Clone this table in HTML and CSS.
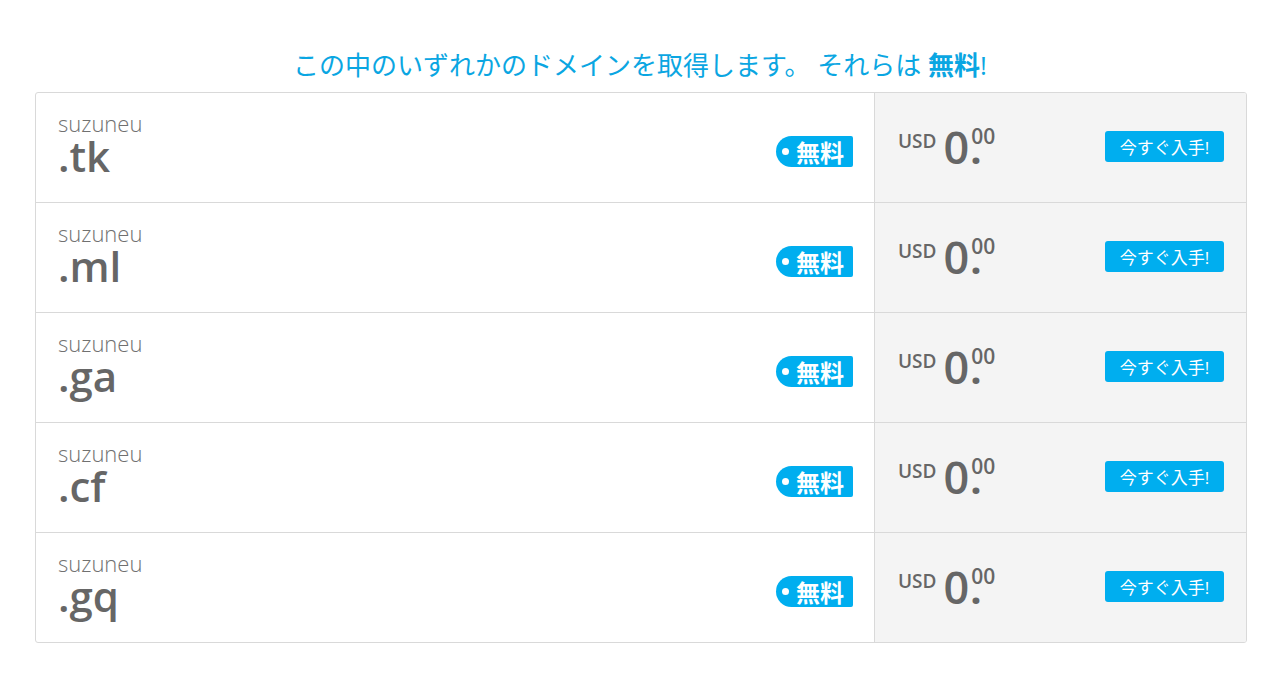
FILE: index.html
```html
<!DOCTYPE html>
<html lang="ja">
<head>
<meta charset="utf-8">
<link rel="stylesheet" href="styles.css">
</head>
<body>
<div class="page">
  <h2 class="title">この中のいずれかのドメインを取得します。 それらは <strong>無料</strong>!</h2>
  <div class="table">
    <div class="row">
      <div class="name"><div class="domain"><span class="sld">suzuneu</span><span class="tld">.tk</span></div><span class="tag"><span class="dot"></span>無料</span></div>
      <div class="price"><div class="amount"><span class="cur">USD</span><span class="int">0</span><span class="dec"><span class="cents">00</span><span class="pt">.</span></span></div><span class="btn">今すぐ入手!</span></div>
    </div>
    <div class="row">
      <div class="name"><div class="domain"><span class="sld">suzuneu</span><span class="tld">.ml</span></div><span class="tag"><span class="dot"></span>無料</span></div>
      <div class="price"><div class="amount"><span class="cur">USD</span><span class="int">0</span><span class="dec"><span class="cents">00</span><span class="pt">.</span></span></div><span class="btn">今すぐ入手!</span></div>
    </div>
    <div class="row">
      <div class="name"><div class="domain"><span class="sld">suzuneu</span><span class="tld">.ga</span></div><span class="tag"><span class="dot"></span>無料</span></div>
      <div class="price"><div class="amount"><span class="cur">USD</span><span class="int">0</span><span class="dec"><span class="cents">00</span><span class="pt">.</span></span></div><span class="btn">今すぐ入手!</span></div>
    </div>
    <div class="row">
      <div class="name"><div class="domain"><span class="sld">suzuneu</span><span class="tld">.cf</span></div><span class="tag"><span class="dot"></span>無料</span></div>
      <div class="price"><div class="amount"><span class="cur">USD</span><span class="int">0</span><span class="dec"><span class="cents">00</span><span class="pt">.</span></span></div><span class="btn">今すぐ入手!</span></div>
    </div>
    <div class="row">
      <div class="name"><div class="domain"><span class="sld">suzuneu</span><span class="tld">.gq</span></div><span class="tag"><span class="dot"></span>無料</span></div>
      <div class="price"><div class="amount"><span class="cur">USD</span><span class="int">0</span><span class="dec"><span class="cents">00</span><span class="pt">.</span></span></div><span class="btn">今すぐ入手!</span></div>
    </div>
  </div>
</div>
</body>
</html>
```
FILE: styles.css
```css
html, body {
  margin: 0;
  padding: 0;
  background: #fff;
  font-family: "Open Sans", "Noto Sans CJK JP", sans-serif;
}
.page {
  padding-top: 47px;
}
.title {
  margin: 0 0 8px;
  text-align: center;
  font-size: 26px;
  font-weight: 400;
  line-height: 37px;
  color: #0aa6e2;
}
.title strong {
  font-weight: 700;
}
.table {
  width: 1212px;
  margin: 0 0 0 35px;
  border: 1px solid #d9d9d9;
  border-radius: 3px;
  box-sizing: border-box;
  overflow: hidden;
}
.row {
  display: grid;
  grid-template-columns: 839px 1fr;
  height: 110px;
  border-top: 1px solid #d9d9d9;
  box-sizing: border-box;
}
.row:first-child {
  border-top: none;
  height: 109px;
}
.name {
  display: flex;
  align-items: center;
  justify-content: space-between;
  padding: 0 21px 0 22px;
  border-right: 1px solid #d9d9d9;
}
.domain {
  display: flex;
  flex-direction: column;
  color: #666;
  margin-top: -6px;
}
.sld {
  font-size: 22px;
  font-weight: 300;
  line-height: 22px;
  color: #707070;
}
.tld {
  font-size: 42px;
  font-weight: 600;
  line-height: 44px;
  color: #666;
}
.tag {
  display: flex;
  align-items: center;
  height: 31px;
  width: 77px;
  box-sizing: border-box;
  padding-left: 6px;
  background: #00aeef;
  border-radius: 16px 2px 2px 16px;
  color: #fff;
  font-size: 24px;
  font-weight: 700;
  font-family: "Noto Sans CJK JP", sans-serif;
  margin-top: 8px;
}
.dot {
  width: 7px;
  height: 7px;
  border-radius: 50%;
  background: #fff;
  margin-right: 7px;
}
.price {
  background: #f4f4f4;
  display: flex;
  align-items: center;
  justify-content: space-between;
  padding: 0 22px 0 23px;
}
.amount {
  display: flex;
  align-items: flex-start;
  color: #666;
  margin-top: -2px;
}
.cur {
  font-size: 19px;
  font-weight: 600;
  line-height: 20px;
  margin-top: 10px;
  margin-right: 7px;
}
.int {
  font-size: 45px;
  font-weight: 600;
  line-height: 52px;
}
.dec {
  display: flex;
  flex-direction: column;
  margin-left: 2px;
}
.cents {
  font-size: 21px;
  font-weight: 600;
  line-height: 18px;
  margin-top: 6px;
}
.pt {
  font-size: 40px;
  font-weight: 700;
  line-height: 8px;
  margin-left: -1px;
}
.btn {
  display: flex;
  align-items: center;
  justify-content: center;
  width: 119px;
  height: 31px;
  background: #00aeef;
  border-radius: 3px;
  color: #fff;
  font-size: 17px;
  margin-top: -2px;
}
```
